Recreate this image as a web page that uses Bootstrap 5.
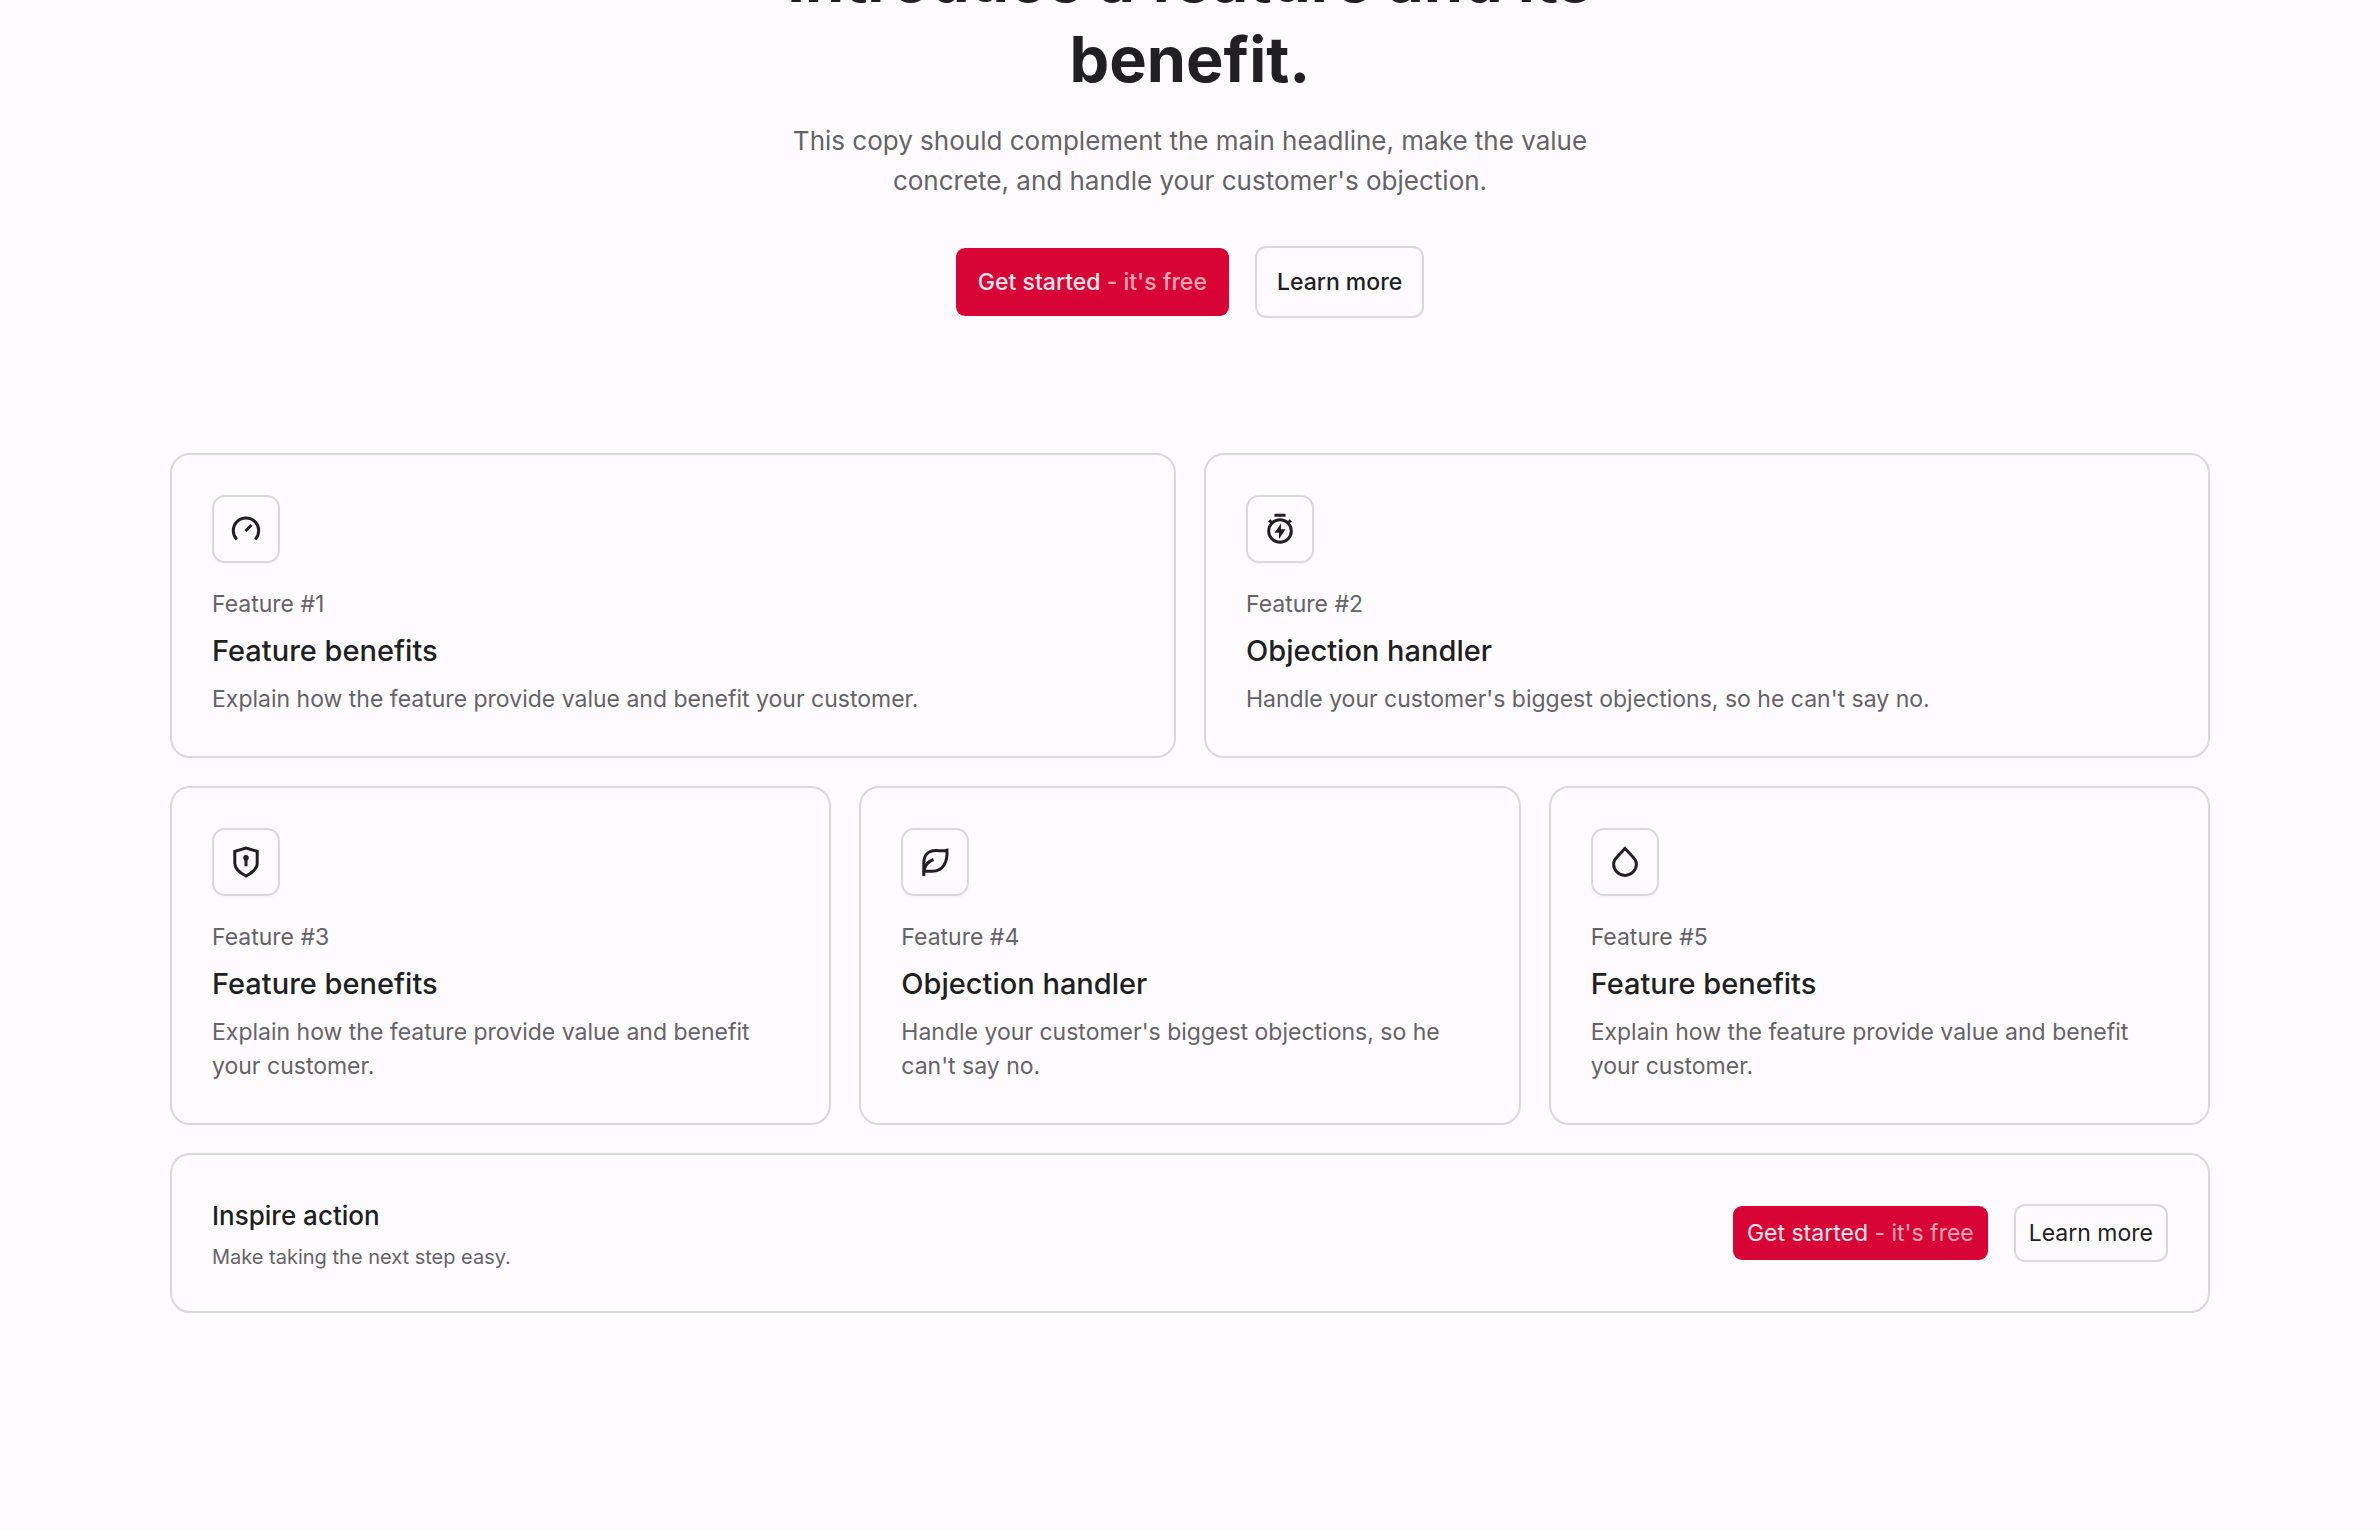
<!DOCTYPE html>
<html lang="en">
<head>
<meta charset="utf-8">
<meta name="viewport" content="width=device-width, initial-scale=1">
<title>Introduce a feature and its benefit</title>
<link href="https://cdn.jsdelivr.net/npm/bootstrap@5.3.0/dist/css/bootstrap.min.css" rel="stylesheet">
<style>
  :root {
    --page: #fdfbfe;
    --ink: #201f22;
    --soft: #656367;
    --line: #d9d8dc;
    --brand: #d70435;
  }
  body {
    background: var(--page);
    color: var(--ink);
    font-family: Inter, "Liberation Sans", sans-serif;
    font-size: 23px;
    line-height: 34px;
    overflow-x: hidden;
  }
  .hero { max-width: 840px; margin-top: -61px; margin-bottom: 135px; }
  .hero h1 { font-size: 63px; line-height: 80px; font-weight: 700; margin-bottom: 22px; }
  .hero-copy { font-size: 26px; line-height: 40px; color: var(--soft); margin-bottom: 45px; padding: 0 20px; }
  .actions { gap: 26px; }
  .cta {
    --bs-btn-font-size: 23px;
    --bs-btn-line-height: 34px;
    --bs-btn-font-weight: 400;
    --bs-btn-border-radius: 9px;
    --bs-btn-border-width: 0;
    --bs-btn-padding-x: 14px;
    --bs-btn-padding-y: 10px;
  }
  .cta-brand {
    --bs-btn-bg: var(--brand); --bs-btn-color: #ffe9ea;
    --bs-btn-hover-bg: #c4002f; --bs-btn-hover-color: #ffe9ea;
  }
  .cta-brand span { color: #ffa9b3; }
  .cta-line {
    --bs-btn-color: var(--ink);
    --bs-btn-border-width: 2px; --bs-btn-border-color: var(--line);
    --bs-btn-hover-bg: #f4f2f6; --bs-btn-hover-color: var(--ink); --bs-btn-hover-border-color: var(--line);
    --bs-btn-border-radius: 11px;
    --bs-btn-padding-x: 13px;
  }
  .hero .cta { --bs-btn-font-weight: 500; --bs-btn-padding-y: 17px; }
  .hero .cta-brand { --bs-btn-padding-x: 22px; }
  .hero .cta-line { --bs-btn-padding-x: 20px; }
  .features { max-width: 2068px; padding: 0 14px; }
  .features .row { --bs-gutter-x: 28px; --bs-gutter-y: 28px; }
  .tile {
    --bs-card-bg: transparent;
    --bs-card-border-color: var(--line);
    --bs-card-border-width: 2px;
    --bs-card-border-radius: 20px;
    --bs-card-spacer-x: 40px;
    --bs-card-spacer-y: 40px;
    --bs-card-color: var(--ink);
  }
  .tile-icon {
    width: 68px; height: 68px; margin-bottom: 24px;
    border: 2px solid var(--line); border-radius: 13px;
    box-shadow: 0 2px 3px rgba(30, 20, 40, .03);
  }
  .tile-icon svg { width: 34px; height: 34px; fill: none; stroke: currentColor; stroke-width: 3; }
  .tile p { color: var(--soft); margin: 0; }
  .tile h2 { font-size: 29px; line-height: 42px; font-weight: 500; margin: 9px 0 10px; }
  .tile h3 { font-size: 26px; line-height: 42px; font-weight: 500; margin: 0 0 6px; }
  .tile .note { font-size: 20px; line-height: 28px; }
</style>
</head>
<body>
<header class="hero mx-auto text-center">
  <h1>Introduce a feature and its benefit.</h1>
  <p class="hero-copy">This copy should complement the main headline, make the value concrete, and handle your customer's objection.</p>
  <div class="actions d-flex justify-content-center align-items-center">
    <button type="button" class="btn cta cta-brand">Get started <span>- it's free</span></button>
    <button type="button" class="btn cta cta-line">Learn more</button>
  </div>
</header>

<main class="features container-fluid mx-auto">
  <div class="row">
    <div class="col-12 col-lg-6">
      <article class="card tile h-100"><div class="card-body">
        <div class="tile-icon d-flex align-items-center justify-content-center">
          <svg viewBox="0 0 34 34" aria-hidden="true"><path d="M7.8 27.4A12.7 12.7 0 1 1 26.2 27.4M16.5 19l6-6"/></svg>
        </div>
        <p>Feature #1</p>
        <h2>Feature benefits</h2>
        <p>Explain how the feature provide value and benefit your customer.</p>
      </div></article>
    </div>
    <div class="col-12 col-lg-6">
      <article class="card tile h-100"><div class="card-body">
        <div class="tile-icon d-flex align-items-center justify-content-center">
          <svg viewBox="0 0 34 34" aria-hidden="true"><circle cx="17" cy="19" r="11.3"/><path d="M11.5 3.2h11M6.2 8.2l3 3M27.8 8.2l-3 3"/><path d="M18 11.5l-6.500 9.300h4.500V27L22.500 17.200h-4.500z" fill="currentColor" stroke="none"/></svg>
        </div>
        <p>Feature #2</p>
        <h2>Objection handler</h2>
        <p>Handle your customer's biggest objections, so he can't say no.</p>
      </div></article>
    </div>
    <div class="col-12 col-lg-4">
      <article class="card tile h-100"><div class="card-body">
        <div class="tile-icon d-flex align-items-center justify-content-center">
          <svg viewBox="0 0 34 34" aria-hidden="true"><path d="M17 3L28.2 6.3V18.5C28.2 24 23.5 27.6 17 31 10.500 27.600 5.800 24 5.800 18.500V6.300z"/><path d="M17 13v8.300"/><circle cx="17" cy="12.800" r="2.800" fill="currentColor" stroke="none"/></svg>
        </div>
        <p>Feature #3</p>
        <h2>Feature benefits</h2>
        <p>Explain how the feature provide value and benefit your customer.</p>
      </div></article>
    </div>
    <div class="col-12 col-lg-4">
      <article class="card tile h-100"><div class="card-body">
        <div class="tile-icon d-flex align-items-center justify-content-center">
          <svg viewBox="0 0 34 34" aria-hidden="true"><path d="M5.800 31V18C5.800 9.500 11 5.500 18 5.500C22 5.500 25 6.500 29 5.200C29.600 16 26 26.300 14 26.300H6.500"/><path d="M5.800 27C6.500 21 9.500 16.500 15.500 14.500"/></svg>
        </div>
        <p>Feature #4</p>
        <h2>Objection handler</h2>
        <p>Handle your customer's biggest objections, so he can't say no.</p>
      </div></article>
    </div>
    <div class="col-12 col-lg-4">
      <article class="card tile h-100"><div class="card-body">
        <div class="tile-icon d-flex align-items-center justify-content-center">
          <svg viewBox="0 0 34 34" aria-hidden="true"><path d="M17 3.500L24.500 11.500C27 14 28.400 16 28.400 19A11.400 11.400 0 0 1 5.600 19C5.600 16 7 14 9.500 11.500z"/></svg>
        </div>
        <p>Feature #5</p>
        <h2>Feature benefits</h2>
        <p>Explain how the feature provide value and benefit your customer.</p>
      </div></article>
    </div>
    <div class="col-12">
      <section class="card tile"><div class="card-body d-flex flex-wrap align-items-center justify-content-between gap-3">
        <div>
          <h3>Inspire action</h3>
          <p class="note">Make taking the next step easy.</p>
        </div>
        <div class="actions d-flex align-items-center">
          <button type="button" class="btn cta cta-brand">Get started <span>- it's free</span></button>
          <button type="button" class="btn cta cta-line">Learn more</button>
        </div>
      </div></section>
    </div>
  </div>
</main>
<script src="https://cdn.jsdelivr.net/npm/bootstrap@5.3.0/dist/js/bootstrap.bundle.min.js"></script>
</body>
</html>
